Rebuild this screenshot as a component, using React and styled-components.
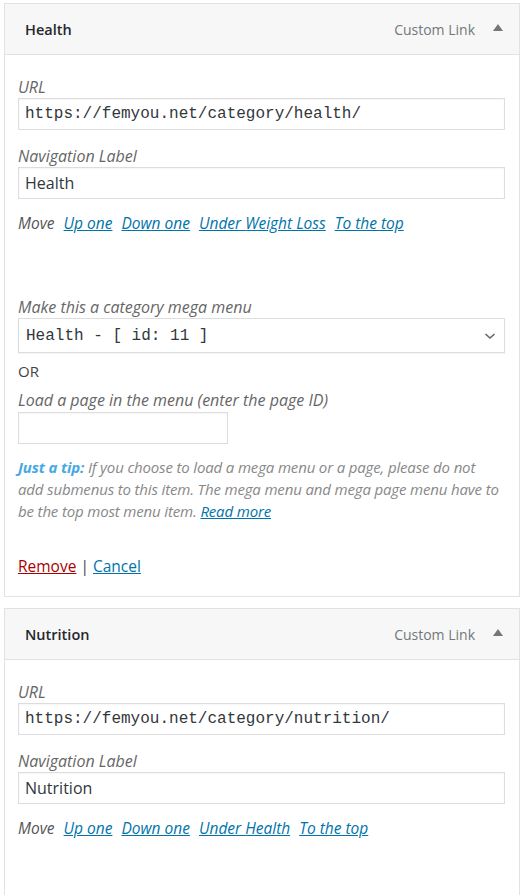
import React from 'react';
import styled, { createGlobalStyle } from 'styled-components';

const GlobalStyle = createGlobalStyle`
  html, body {
    margin: 0;
    padding: 0;
    background: #fff;
  }
  body {
    font-family: 'Open Sans', 'Noto Sans', sans-serif;
    color: #444;
  }
`;

const Page = styled.div`
  padding: 3px 5px 0 4px;
  display: flex;
  flex-direction: column;
  gap: 11px;
`;

const Item = styled.div`
  border: 1px solid #e2e2e2;
  border-bottom: ${(p) => (p.$open ? 'none' : '1px solid #e2e2e2')};
  background: #fff;
`;

const Handle = styled.div`
  height: 50px;
  display: flex;
  align-items: center;
  padding: 0 16px 0 20px;
  background: #f7f7f7;
  border-bottom: 1px solid #e2e2e2;
`;

const Title = styled.span`
  flex: 1;
  font-size: 14.5px;
  font-weight: 600;
  color: #23282d;
`;

const ItemType = styled.span`
  font-size: 14px;
  color: #72777c;
  margin-right: 18px;
`;

const Arrow = styled.span`
  width: 0;
  height: 0;
  border-left: 5px solid transparent;
  border-right: 5px solid transparent;
  border-bottom: 7px solid #72777c;
  margin-top: -4px;
`;

const Settings = styled.div`
  padding: 22px 14px ${(p) => p.$pad || 20}px 13px;
  display: flex;
  flex-direction: column;
`;

const Field = styled.label`
  display: flex;
  flex-direction: column;
  gap: ${(p) => (p.$tight ? 1 : 2)}px;
  margin-bottom: ${(p) => p.$gap ?? 16}px;
  margin-top: ${(p) => p.$top || 0}px;
`;

const Caption = styled.span`
  font-size: 16px;
  font-style: italic;
  color: #666;
  line-height: 20px;
`;

const TextInput = styled.input`
  box-sizing: border-box;
  width: ${(p) => p.$width || '100%'};
  height: ${(p) => p.$height || 32}px;
  border: 1px solid #ddd;
  box-shadow: inset 0 1px 2px rgba(0, 0, 0, 0.04);
  padding: 0 6px;
  font-family: ${(p) =>
    p.$mono ? "'Liberation Mono', 'DejaVu Sans Mono', monospace" : "'Open Sans', sans-serif"};
  font-size: 16px;
  color: #32373c;
  background: #fff;
  outline: none;
`;

const SelectBox = styled.div`
  box-sizing: border-box;
  height: 35px;
  border: 1px solid #ddd;
  box-shadow: 0 1px 1px rgba(0, 0, 0, 0.04);
  display: flex;
  align-items: center;
  justify-content: space-between;
  padding: 0 8px 0 7px;
  font-family: 'Liberation Mono', 'DejaVu Sans Mono', monospace;
  font-size: 16px;
  color: #32373c;
`;

const MoveRow = styled.div`
  display: flex;
  align-items: baseline;
  gap: 9px;
  font-size: 15.5px;
  font-style: italic;
  color: #555;
  line-height: 22px;
  margin-top: -3px;
`;

const Link = styled.a`
  color: ${(p) => (p.$danger ? '#a00' : '#0073aa')};
  text-decoration: underline;
  cursor: pointer;
`;

const Or = styled.div`
  font-size: 15px;
  color: #444;
  line-height: 20px;
  margin: 8px 0 9px;
`;

const Tip = styled.p`
  margin: 12px 0 0;
  font-size: 15px;
  font-style: italic;
  line-height: 22px;
  color: #888;
  letter-spacing: -0.15px;
  white-space: nowrap;
`;

const TipLabel = styled.b`
  color: #46a9e3;
  font-weight: 700;
`;

const Actions = styled.div`
  margin-top: 34px;
  font-size: 15.5px;
  color: #444;
  line-height: 20px;
`;

const Chevron = () => (
  <svg width="12" height="8" viewBox="0 0 12 8">
    <path d="M1.5 2 L6 6 L10.5 2" fill="none" stroke="#666" strokeWidth="1.6" />
  </svg>
);

const MoveLinks = ({ under }) => (
  <MoveRow>
    <span>Move</span>
    <Link>Up one</Link>
    <Link>Down one</Link>
    <Link>Under {under}</Link>
    <Link>To the top</Link>
  </MoveRow>
);

const App = () => {
  return (
    <Page>
      <GlobalStyle />
      <Item>
        <Handle>
          <Title>Health</Title>
          <ItemType>Custom Link</ItemType>
          <Arrow />
        </Handle>
        <Settings>
          <Field $tight>
            <Caption>URL</Caption>
            <TextInput $mono readOnly value="https://femyou.net/category/health/" />
          </Field>
          <Field $tight>
            <Caption>Navigation Label</Caption>
            <TextInput readOnly value="Health" />
          </Field>
          <MoveLinks under="Weight Loss" />
          <Field $tight $top={63} $gap={0}>
            <Caption>Make this a category mega menu</Caption>
            <SelectBox>
              <span>Health - [ id: 11 ]</span>
              <Chevron />
            </SelectBox>
          </Field>
          <Or>OR</Or>
          <Field $gap={0}>
            <Caption>Load a page in the menu (enter the page ID)</Caption>
            <TextInput $width="210px" readOnly value="" />
          </Field>
          <Tip>
            <TipLabel>Just a tip:</TipLabel> If you choose to load a mega menu or a page, please do not
            <br />
            add submenus to this item. The mega menu and mega page menu have to
            <br />
            be the top most menu item. <Link>Read more</Link>
          </Tip>
          <Actions>
            <Link $danger>Remove</Link> | <Link>Cancel</Link>
          </Actions>
        </Settings>
      </Item>
      <Item $open>
        <Handle>
          <Title>Nutrition</Title>
          <ItemType>Custom Link</ItemType>
          <Arrow />
        </Handle>
        <Settings $pad={60}>
          <Field $tight>
            <Caption>URL</Caption>
            <TextInput $mono readOnly value="https://femyou.net/category/nutrition/" />
          </Field>
          <Field $tight>
            <Caption>Navigation Label</Caption>
            <TextInput readOnly value="Nutrition" />
          </Field>
          <MoveLinks under="Health" />
        </Settings>
      </Item>
    </Page>
  );
};

export default App;
